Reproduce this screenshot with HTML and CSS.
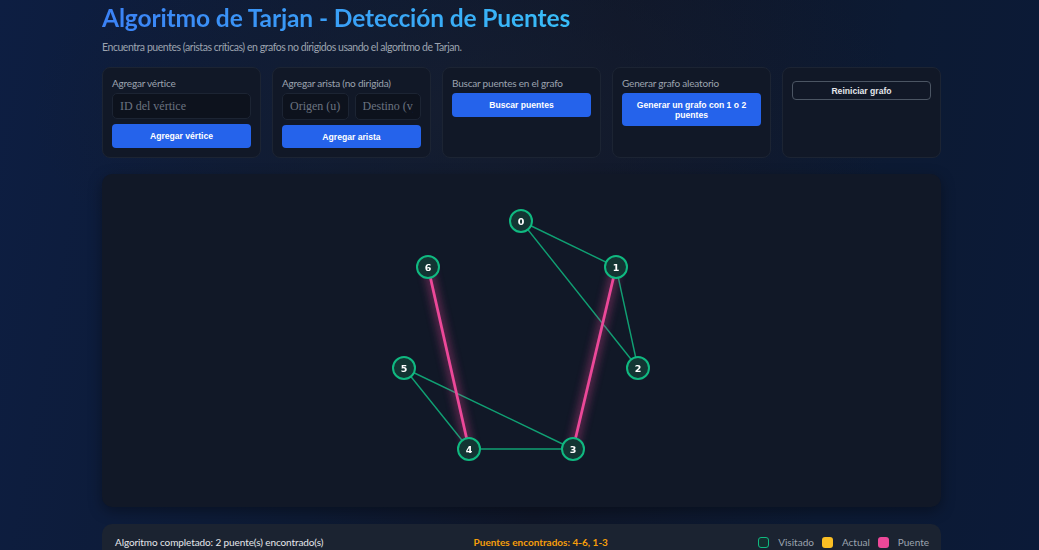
FILE: index.html
```html
<!DOCTYPE html>
<html lang="es">
<head>
<meta charset="utf-8">
<title>Algoritmo de Tarjan</title>
<link rel="stylesheet" href="styles.css">
</head>
<body>
<div class="page">
  <h1 class="title">Algoritmo de Tarjan - Detección de Puentes</h1>
  <p class="subtitle">Encuentra puentes (aristas críticas) en grafos no dirigidos usando el algoritmo de Tarjan.</p>

  <div class="controls">
    <div class="card">
      <div class="card-label">Agregar vértice</div>
      <input class="field" type="text" placeholder="ID del vértice">
      <button class="btn">Agregar vértice</button>
    </div>
    <div class="card">
      <div class="card-label">Agregar arista (no dirigida)</div>
      <div class="field-row">
        <input class="field" type="text" placeholder="Origen (u)">
        <input class="field" type="text" placeholder="Destino (v)">
      </div>
      <button class="btn">Agregar arista</button>
    </div>
    <div class="card">
      <div class="card-label">Buscar puentes en el grafo</div>
      <button class="btn">Buscar puentes</button>
    </div>
    <div class="card">
      <div class="card-label">Generar grafo aleatorio</div>
      <button class="btn btn-tall">Generar un grafo con 1 o 2 puentes</button>
    </div>
    <div class="card card-reset">
      <button class="btn-outline">Reiniciar grafo</button>
    </div>
  </div>

  <div class="canvas">
    <svg class="graph" width="839" height="333" viewBox="0 0 839 333">
      <defs>
        <filter id="glow" x="-50%" y="-50%" width="200%" height="200%">
          <feGaussianBlur stdDeviation="4"/>
        </filter>
      </defs>
      <g class="edges">
        <line x1="419" y1="47" x2="514" y2="93"/>
        <line x1="419" y1="47" x2="536" y2="194"/>
        <line x1="514" y1="93" x2="536" y2="194"/>
        <line x1="302" y1="194" x2="367" y2="275"/>
        <line x1="302" y1="194" x2="471" y2="275"/>
        <line x1="367" y1="275" x2="471" y2="275"/>
      </g>
      <g class="bridge-glow" filter="url(#glow)">
        <line x1="326" y1="93" x2="367" y2="275"/>
        <line x1="514" y1="93" x2="471" y2="275"/>
      </g>
      <g class="bridges">
        <line x1="326" y1="93" x2="367" y2="275"/>
        <line x1="514" y1="93" x2="471" y2="275"/>
      </g>
      <g class="nodes">
        <circle cx="419" cy="47" r="11"/>
        <circle cx="514" cy="93" r="11"/>
        <circle cx="536" cy="194" r="11"/>
        <circle cx="471" cy="275" r="11"/>
        <circle cx="367" cy="275" r="11"/>
        <circle cx="302" cy="194" r="11"/>
        <circle cx="326" cy="93" r="11"/>
      </g>
      <g class="labels">
        <text x="419" y="50.5">0</text>
        <text x="514" y="96.5">1</text>
        <text x="536" y="197.5">2</text>
        <text x="471" y="278.5">3</text>
        <text x="367" y="278.5">4</text>
        <text x="302" y="197.5">5</text>
        <text x="326" y="96.5">6</text>
      </g>
    </svg>
  </div>

  <div class="status">
    <span class="status-msg">Algoritmo completado: 2 puente(s) encontrado(s)</span>
    <span class="status-bridges">Puentes encontrados: 4-6, 1-3</span>
    <span class="legend">
      <span class="swatch swatch-visited"></span><span class="legend-text">Visitado</span>
      <span class="swatch swatch-current"></span><span class="legend-text">Actual</span>
      <span class="swatch swatch-bridge"></span><span class="legend-text">Puente</span>
    </span>
  </div>
</div>
</body>
</html>
```

FILE: styles.css
```css
* { box-sizing: border-box; }
html, body { height: 100%; }
body {
  margin: 0;
  overflow: hidden;
  font-family: "Lato", "Noto Sans", sans-serif;
  color: #e5e7eb;
  background:
    radial-gradient(ellipse 60% 55% at 45% 20%, rgba(22,30,48,0.85), rgba(22,30,48,0) 70%),
    linear-gradient(100deg, #0d1e42 0%, #0d1a33 35%, #0f1628 55%, #0c1a33 80%, #0b1a38 100%);
}
.page {
  width: 839px;
  margin-left: 102px;
}
.title {
  margin: 3px 0 0;
  font-size: 24.6px;
  line-height: 29px;
  font-weight: 700;
  letter-spacing: -0.15px;
  background: linear-gradient(90deg, #3b82f6 0%, #38bdf8 100%);
  -webkit-background-clip: text;
  background-clip: text;
  color: transparent;
  display: inline-block;
}
.subtitle {
  margin: 8px 0 0;
  font-size: 10.5px;
  line-height: 14px;
  letter-spacing: -0.45px;
  color: #9ca3af;
}
.controls {
  margin-top: 13px;
  display: grid;
  grid-template-columns: repeat(5, 159px);
  column-gap: 11px;
}
.card {
  height: 91px;
  background: #111827;
  border: 1px solid #1c2433;
  border-radius: 8px;
  padding: 9px 9px;
  display: flex;
  flex-direction: column;
}
.card-label {
  font-size: 10px;
  line-height: 13px;
  letter-spacing: -0.2px;
  color: #9ca3af;
  margin-bottom: 3px;
}
.field-row {
  display: flex;
  gap: 6px;
}
.field {
  width: 100%;
  min-width: 0;
  height: 27px;
  background: #0d121d;
  border: 1px solid #1c2433;
  border-radius: 5px;
  padding: 0 7px;
  font-family: "Liberation Serif", "DejaVu Serif", serif;
  font-size: 12px;
  color: #e5e7eb;
}
.field::placeholder { color: #6b7280; }
.btn {
  margin-top: 5px;
  height: 24px;
  width: 100%;
  background: #2563eb;
  color: #ffffff;
  border: 0;
  border-radius: 4px;
  font-family: "Liberation Sans", "DejaVu Sans", sans-serif;
  font-weight: 700;
  font-size: 8.6px;
  line-height: 10px;
  padding: 0 12px;
}
.card .card-label + .btn { margin-top: 0; }
.btn-tall { height: 33px; }
.card-reset { padding-top: 13px; }
.btn-outline {
  height: 19px;
  width: 100%;
  background: transparent;
  color: #e5e7eb;
  border: 1px solid #4b5563;
  border-radius: 4px;
  font-family: "Liberation Sans", "DejaVu Sans", sans-serif;
  font-weight: 700;
  font-size: 8.6px;
}
.canvas {
  margin-top: 16px;
  height: 333px;
  background: #111827;
  border-radius: 10px;
  box-shadow: 0 4px 14px rgba(0,0,0,0.35);
  overflow: hidden;
}
.graph { display: block; }
.edges line { stroke: #10b981; stroke-width: 1.4; opacity: 0.85; }
.bridge-glow line { stroke: #ec4899; stroke-width: 8; opacity: 0.4; }
.bridges line { stroke: #ec4899; stroke-width: 2.8; }
.nodes circle { fill: #133533; stroke: #10b981; stroke-width: 2; }
.labels text {
  fill: #ffffff;
  font-family: "DejaVu Sans", sans-serif;
  font-weight: 700;
  font-size: 9.5px;
  text-anchor: middle;
}
.status {
  margin-top: 17px;
  height: 40px;
  background: #1b2331;
  border-radius: 10px;
  display: flex;
  align-items: flex-start;
  justify-content: space-between;
  padding: 12px 12px 0 13px;
  font-size: 10px;
  line-height: 13px;
}
.status-msg { color: #e5e7eb; letter-spacing: -0.1px; }
.status-bridges { color: #f59e0b; font-weight: 700; }
.legend {
  display: flex;
  align-items: center;
  color: #9ca3af;
}
.swatch {
  width: 11px;
  height: 11px;
  border-radius: 3px;
  margin-right: 9px;
}
.legend-text { margin-right: 8px; }
.legend-text:last-child { margin-right: 0; }
.swatch-visited { background: #14302f; border: 1.5px solid #10b981; }
.swatch-current { background: #fbbf24; }
.swatch-bridge { background: #ec4899; }
```
